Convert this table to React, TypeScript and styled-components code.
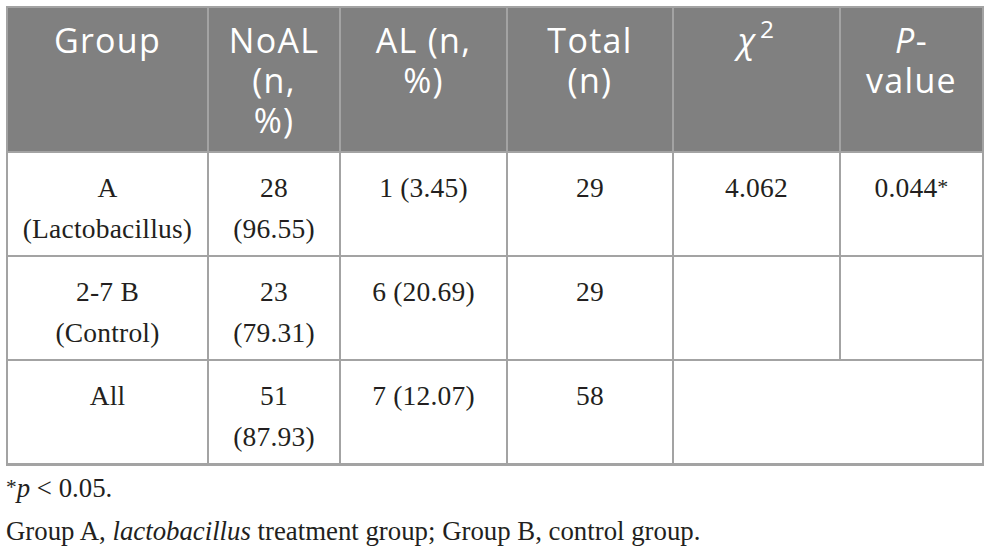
import React from 'react';
import styled, { createGlobalStyle } from 'styled-components';

const GlobalStyle = createGlobalStyle`
  html, body {
    margin: 0;
    padding: 0;
    background: #ffffff;
  }
`;

const Page = styled.div`
  width: 989px;
  height: 555px;
  padding: 6px 0 0 6px;
  box-sizing: border-box;
  overflow: hidden;
`;

const Table = styled.table`
  width: 976px;
  table-layout: fixed;
  border-collapse: collapse;
  border-bottom: 3px solid #a3a3a3;
`;

const HeadCell = styled.th`
  background: #808080;
  color: #ffffff;
  font-family: "Open Sans", Lato, sans-serif;
  font-weight: 400;
  font-size: 34px;
  letter-spacing: 1.3px;
  line-height: 40px;
  padding: 12px 2px 11px;
  text-align: center;
  vertical-align: top;
  border: 2px solid #a3a3a3;
`;

const Cell = styled.td`
  color: #231f20;
  font-family: "Liberation Serif", "Times New Roman", serif;
  font-size: 27.5px;
  letter-spacing: 0.2px;
  line-height: 41px;
  padding: 14px 0 6px;
  text-align: center;
  vertical-align: top;
  border: 2px solid #a3a3a3;
  height: 81px;
  white-space: nowrap;
`;

const Sup = styled.sup`
  font-size: 0.72em;
  vertical-align: 0.6em;
  line-height: 0;
  margin-left: 4px;
`;

const Star = styled.span`
  font-size: 0.8em;
  vertical-align: 0.15em;
  line-height: 0;
`;

const Notes = styled.div`
  font-family: "Liberation Serif", "Times New Roman", serif;
  color: #231f20;
  font-size: 26.8px;
  line-height: 43px;
  padding-top: 1px;
`;

const columns = [201, 132, 167, 166, 167, 143];

const rows = [
  ['A\n(Lactobacillus)', '28\n(96.55)', '1 (3.45)', '29', '4.062', '0.044'],
  ['2-7 B\n(Control)', '23\n(79.31)', '6 (20.69)', '29', '', ''],
];

const lines = (text: string) =>
  text.split('\n').map((line, i) => (
    <React.Fragment key={i}>
      {i > 0 && <br />}
      {line}
    </React.Fragment>
  ));

export default function App() {
  return (
    <Page>
      <GlobalStyle />
      <Table>
        <colgroup>
          {columns.map((w, i) => (
            <col key={i} style={{ width: w }} />
          ))}
        </colgroup>
        <thead>
          <tr>
            <HeadCell>Group</HeadCell>
            <HeadCell>NoAL<br />(n,<br />%)</HeadCell>
            <HeadCell>AL (n,<br />%)</HeadCell>
            <HeadCell>Total<br />(n)</HeadCell>
            <HeadCell><i>χ</i><Sup>2</Sup></HeadCell>
            <HeadCell><i>P</i>-<br />value</HeadCell>
          </tr>
        </thead>
        <tbody>
          {rows.map((row, r) => (
            <tr key={r}>
              {row.map((c, i) => (
                <Cell key={i}>
                  {lines(c)}
                  {r === 0 && i === 5 && <Star>*</Star>}
                </Cell>
              ))}
            </tr>
          ))}
          <tr>
            <Cell>All</Cell>
            <Cell>51<br />(87.93)</Cell>
            <Cell>7 (12.07)</Cell>
            <Cell>58</Cell>
            <Cell colSpan={2} />
          </tr>
        </tbody>
      </Table>
      <Notes>
        <div><Star>*</Star><i>p</i> &lt; 0.05.</div>
        <div>Group A, <i>lactobacillus</i> treatment group; Group B, control group.</div>
      </Notes>
    </Page>
  );
}
